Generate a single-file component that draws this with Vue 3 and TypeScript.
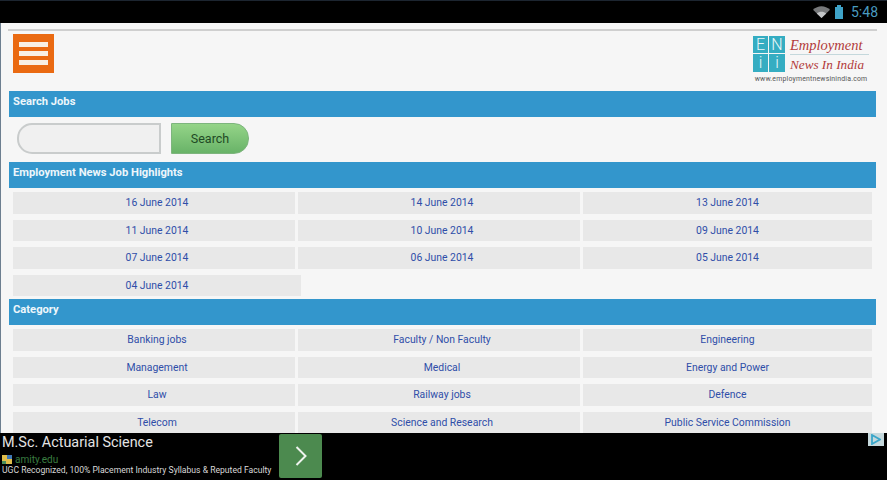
<script setup lang="ts">
const dates = [
  '16 June 2014', '14 June 2014', '13 June 2014',
  '11 June 2014', '10 June 2014', '09 June 2014',
  '07 June 2014', '06 June 2014', '05 June 2014',
]

const categories = [
  'Banking jobs', 'Faculty / Non Faculty', 'Engineering',
  'Management', 'Medical', 'Energy and Power',
  'Law', 'Railway jobs', 'Defence',
  'Telecom', 'Science and Research', 'Public Service Commission',
]
</script>

<template>
  <div class="screen">
    <div class="status-bar">
      <svg class="wifi" width="17" height="12" viewBox="0 0 17 12">
        <path d="M0 3.800C4.700-.9 12.300-.9 17 3.800L8.500 12Z" fill="#77797b" />
        <path d="M3.800 7.500C6.400 5.200 10.600 5.200 13.200 7.500L8.500 12Z" fill="#c4c6c8" />
      </svg>
      <span class="battery"></span>
      <span class="clock">5:48</span>
    </div>

    <div class="page">
      <div class="top-rule"></div>
      <div class="header">
        <button class="menu-btn">
          <span></span>
          <span></span>
          <span></span>
        </button>
        <div class="logo">
          <div class="logo-grid">
            <span>E</span>
            <span>N</span>
            <span>i</span>
            <span>i</span>
          </div>
          <div class="logo-text">
            <span class="logo-line first">Employment</span>
            <span class="logo-line second">News In India</span>
          </div>
          <span class="logo-url">www.employmentnewsinindia.com</span>
        </div>
      </div>

      <div class="section-title">Search Jobs</div>
      <div class="search-row">
        <input class="search-input" type="text" />
        <button class="search-btn">Search</button>
      </div>

      <div class="section-title">Employment News Job Highlights</div>
      <div class="link-grid dates">
        <a v-for="d in dates" :key="d" class="cell">{{ d }}</a>
        <a class="cell last-cell">04 June 2014</a>
      </div>

      <div class="section-title">Category</div>
      <div class="link-grid">
        <a v-for="c in categories" :key="c" class="cell">{{ c }}</a>
      </div>
    </div>

    <div class="ad">
      <div class="ad-copy">
        <div class="ad-title">M.Sc. Actuarial Science</div>
        <div class="ad-source">
          <svg class="ad-favicon" width="10" height="9" viewBox="0 0 10 9">
            <rect width="10" height="9" fill="#e0bd4a" />
            <rect x="5" width="5" height="4" fill="#3f78b5" />
            <rect y="6" width="4" height="3" fill="#4a8f5a" />
          </svg>
          <span>amity.edu</span>
        </div>
        <div class="ad-desc">UGC Recognized, 100% Placement Industry Syllabus &amp; Reputed Faculty</div>
      </div>
      <div class="ad-go">
        <svg width="14" height="22" viewBox="0 0 14 22">
          <path d="M2.500 2L11.500 11L2.500 20" fill="none" stroke="#eef3ee" stroke-width="2" />
        </svg>
      </div>
      <div class="ad-choice">
        <svg width="10" height="11" viewBox="0 0 10 11">
          <path d="M1 1L9 5.500L1 10Z" fill="none" stroke="#3aa6c9" stroke-width="1.800" />
        </svg>
      </div>
    </div>
  </div>
</template>

<style>
html,
body {
  margin: 0;
  background: #000;
}
</style>

<style scoped>
.screen {
  position: relative;
  display: flex;
  flex-direction: column;
  width: 887px;
  height: 480px;
  overflow: hidden;
  font-family: Roboto, "Liberation Sans", sans-serif;
  background: #000;
}

.status-bar {
  box-sizing: border-box;
  flex: 0 0 23px;
  display: flex;
  align-items: center;
  justify-content: flex-end;
  padding-right: 9px;
  border-top: 1px solid #1c2530;
  background: #000;
}

.wifi {
  margin-right: 5px;
}

.battery {
  position: relative;
  width: 8px;
  height: 12px;
  margin-top: 1px;
  margin-right: 8px;
  background: #3fa3c8;
}

.battery::before {
  content: "";
  position: absolute;
  top: -2px;
  left: 2px;
  width: 4px;
  height: 2px;
  background: #3fa3c8;
}

.clock {
  font-size: 14px;
  color: #4a9cc0;
}

.page {
  flex: 1;
  min-height: 0;
  overflow: hidden;
  padding: 6px 11px 0 8px;
  background: #f6f6f6;
  border-left: 1px solid #6d7f90;
}

.top-rule {
  height: 2px;
  background: #cfcfcf;
  margin-left: -1px;
  margin-right: -1px;
}

.header {
  box-sizing: border-box;
  display: flex;
  align-items: flex-start;
  justify-content: space-between;
  height: 60px;
  padding: 3px 7px 0 4px;
}

.menu-btn {
  display: flex;
  flex-direction: column;
  justify-content: center;
  gap: 4.500px;
  width: 41px;
  height: 39px;
  padding: 0 6px;
  border: none;
  background: #ea6a12;
}

.menu-btn span {
  height: 4.500px;
  background: #f8efe4;
}

.logo {
  display: grid;
  grid-template-columns: 32px auto;
  column-gap: 5px;
  width: 116px;
  margin-top: 2px;
}

.logo-grid {
  display: grid;
  grid-template-columns: 15px 16px;
  grid-template-rows: 17px 18px;
  gap: 1px;
  width: 32px;
}

.logo-grid span {
  text-align: center;
  font-size: 16px;
  font-weight: 300;
  line-height: 17px;
  color: #eaf7f9;
  background: #35adc2;
}

.logo-text {
  display: flex;
  flex-direction: column;
  font-family: "Liberation Serif", serif;
  font-style: italic;
  color: #b23a3a;
}

.logo-line {
  height: 18px;
  line-height: 19px;
  white-space: nowrap;
}

.logo-line.first {
  font-size: 14.500px;
  border-bottom: 1px solid #c4d8dc;
}

.logo-line.second {
  font-size: 13.200px;
}

.logo-url {
  grid-column: 1 / 3;
  margin-top: 3px;
  font-size: 6.900px;
  line-height: 7px;
  letter-spacing: 0.200px;
  white-space: nowrap;
  color: #555;
  text-align: center;
}

.section-title {
  height: 26px;
  padding-left: 4px;
  line-height: 21px;
  font-size: 11.200px;
  font-weight: 700;
  color: #eef6fb;
  background: #3396cc;
}

.search-row {
  box-sizing: border-box;
  display: flex;
  align-items: center;
  gap: 10px;
  height: 45px;
  padding: 0 0 2px 8px;
}

.search-input {
  box-sizing: border-box;
  width: 144px;
  height: 31px;
  border: 2px solid #c9cccc;
  border-radius: 15px 0 0 15px;
  background: #f0f0f0;
}

.search-btn {
  box-sizing: border-box;
  width: 78px;
  height: 31px;
  border: 1px solid #7db57d;
  border-radius: 0 15px 15px 0;
  font-family: inherit;
  font-size: 12.500px;
  color: #1f4a24;
  background: linear-gradient(#94d488, #69b368);
}

.link-grid {
  display: grid;
  grid-template-columns: 282px 282px 289px;
  grid-auto-rows: 21.500px;
  gap: 6px 3px;
  padding: 4px 0 3px 4px;
}

.cell {
  text-align: center;
  line-height: 21.500px;
  font-size: 10.400px;
  color: #2f4ea8;
  background: #e8e8e8;
}

.cell:nth-child(3n + 1),
.cell:nth-child(3n + 2) {
  padding-left: 6px;
}

.cell.last-cell {
  margin-right: -6px;
  padding-left: 0;
}

.ad {
  position: relative;
  flex: 0 0 47px;
  display: flex;
  align-items: flex-start;
  background: #000;
}

.ad-copy {
  box-sizing: border-box;
  width: 279px;
  padding-left: 2px;
}

.ad-title {
  font-size: 14.400px;
  line-height: 20px;
  color: #e4e4e4;
}

.ad-source {
  display: flex;
  align-items: center;
  gap: 3px;
  height: 12px;
  font-size: 10px;
  color: #3a7d40;
}

.ad-desc {
  font-size: 8.600px;
  line-height: 11px;
  white-space: nowrap;
  color: #d8d8d8;
}

.ad-go {
  display: flex;
  align-items: center;
  justify-content: center;
  width: 43px;
  height: 44px;
  margin-top: 1px;
  border-radius: 2px;
  background: #4c8a4f;
}

.ad-choice {
  position: absolute;
  top: 0;
  right: 3px;
  display: flex;
  align-items: center;
  justify-content: center;
  width: 16px;
  height: 13px;
  background: #c5d8dc;
}
</style>
